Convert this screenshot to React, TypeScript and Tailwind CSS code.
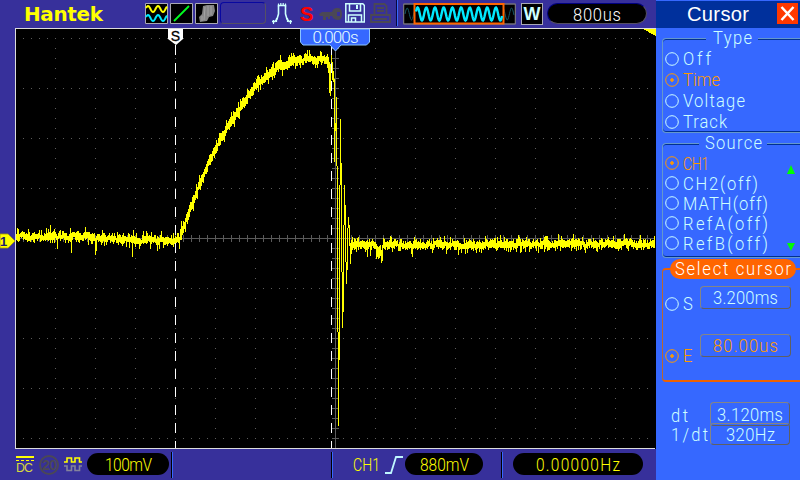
import React, { useLayoutEffect, useRef } from "react";

/* Condensed text whose tracking is tuned so that it fills a given width. */
function Fit({ text, w, squeeze = 0.92, className = "" }: { text: string; w: number; squeeze?: number; className?: string }) {
  const ref = useRef<HTMLSpanElement>(null);
  useLayoutEffect(() => {
    const el = ref.current;
    if (!el) return;
    el.style.letterSpacing = "0px";
    el.style.transform = "none";
    const natural = el.getBoundingClientRect().width;
    el.style.letterSpacing = `${(w / squeeze - natural) / Math.max(1, text.length - 1)}px`;
    el.style.transform = `scaleX(${squeeze})`;
  }, [text, w, squeeze]);
  return (
    <span className="block shrink-0" style={{ width: w }}>
      <span ref={ref} className={`block w-max origin-left whitespace-pre font-['Roboto',sans-serif] font-light text-[18px] leading-[20px] ${className}`}>
        {text}
      </span>
    </span>
  );
}

function noise(i: number) {
  const v = Math.sin(i * 127.1 + 11.7) * 43758.5453;
  return v - Math.floor(v);
}

const RISE: [number, number][] = [
  [176, 241], [180, 236], [183, 228], [186, 219], [190, 208], [195, 196], [200, 183], [205, 170], [210, 160],
  [220, 138], [230, 123], [240, 107], [250, 93], [260, 81], [270, 72], [280, 66], [290, 63], [300, 60], [327, 60], [330, 68],
];

const RING: [number, number, number][] = [
  [327, 54, 68], [328, 57, 73], [329, 62, 93], [330, 64, 96], [331, 54, 70], [332, 62, 80], [333, 71, 82],
  [334, 79, 162], [335, 123, 131], [336, 97, 166], [337, 166, 332], [338, 332, 426], [339, 185, 360],
  [340, 119, 185], [341, 163, 272], [342, 272, 328], [343, 225, 312], [344, 185, 225], [345, 205, 262],
  [346, 262, 284], [347, 228, 270], [348, 217, 228], [349, 225, 246], [350, 243, 264], [351, 240, 254], [352, 237, 250],
];

const SPIKES: Record<number, [number, number]> = {
  17: [228, 241], 50: [225, 243], 57: [236, 249], 71: [233, 253], 85: [227, 240], 95: [238, 255], 96: [236, 251],
  102: [230, 243], 132: [236, 257], 157: [236, 251], 173: [233, 247], 179: [237, 249], 181: [221, 240],
  367: [240, 257], 370: [242, 256], 376: [244, 259], 377: [246, 257], 378: [247, 259], 379: [246, 258],
  380: [245, 256], 381: [250, 263], 382: [245, 261], 412: [244, 257],
};

function tracePath() {
  let d = "";
  const bar = (x: number, a: number, b: number) => {
    d += `M${x} ${Math.round(a)}h1V${Math.round(b)}h-1z`;
  };
  for (let x = 16; x < 655; x++) {
    if (x >= 327 && x <= 352) continue;
    if (SPIKES[x]) {
      bar(x, SPIKES[x][0], SPIKES[x][1]);
      continue;
    }
    let c: number;
    if (x < 176) c = x < 85 ? 236.5 : 236.5 + Math.min(1, (x - 85) / 40) * 3.5;
    else if (x < 327) {
      const k = RISE.findIndex((p) => p[0] > x);
      const [x0, y0] = RISE[k - 1];
      const [x1, y1] = RISE[k];
      c = y0 + ((x - x0) / (x1 - x0)) * (y1 - y0);
    } else c = x < 500 ? 245 : 244.2;
    c += (noise((x >> 1) + 5000) - 0.5) * 3.2;
    const n1 = noise(x);
    const n2 = noise(x + 700);
    const big1 = noise(x + 1900) > 0.85 ? 4 : 0;
    const big2 = noise(x + 2900) > 0.86 ? 4 : 0;
    const rise = x > 176 && x < 300 ? 1 : 0;
    bar(x, c - 1.8 - rise - n1 * 3.4 - big1, c + 1.8 + rise + n2 * 3.2 + big2);
  }
  RING.forEach(([x, a, b]) => bar(x, a, b));
  return d;
}

function gridPath() {
  let d = "";
  for (let y = 38; y <= 438; y += 50) {
    if (y === 238) continue;
    for (let x = 23; x < 655; x += 8) d += `M${x} ${y}h1v1h-1z`;
  }
  for (let x = 55; x < 655; x += 40) {
    if (x === 335) continue;
    for (let y = 38; y < 448; y += 10) d += `M${x} ${y}h1v1h-1z`;
  }
  return d;
}

function axisPath() {
  let d = "M16 238h639v1H16zM335 29h1v419h-1z";
  for (let x = 23; x < 655; x += 8) d += `M${x} 235h1v7h-1z`;
  for (let y = 38; y < 448; y += 10) d += `M332 ${y}h7v1h-7z`;
  return d;
}

function wave(x0: number, x1: number, mid: number, amp: number, period: number, phase = 0) {
  let d = "";
  for (let x = x0; x <= x1; x += 0.5) {
    d += `${d ? "L" : "M"}${x} ${(mid - amp * Math.sin(((x - x0) / period) * Math.PI * 2 + phase)).toFixed(2)}`;
  }
  return d;
}

function Scope() {
  return (
    <svg width="656" height="421" viewBox="0 28 656 421" className="block shrink-0">
      <rect x="15" y="28" width="641" height="421" fill="#000" />
      <g shapeRendering="crispEdges">
        <path d={gridPath()} fill="#5c5c5c" />
        <path d={axisPath()} fill="#5a5a5a" />
        <path d={tracePath()} fill="#ffff00" />
        <path d="M175.5 45V448M331.5 45V448" stroke="#fff" strokeDasharray="10 8" />
        <path d="M15 28.5H656M15.5 28V449M15 448.5H655" stroke="#dcdcdc" />
        <path d="M643 29h13v7z" fill="#ffff00" />
      </g>
      <path d="M168 29h15v10l-7 6-8-6z" fill="#fff" />
      <text x="175.5" y="41" textAnchor="middle" fontSize="14" fontFamily="Liberation Sans, sans-serif" fill="#000" stroke="#000" strokeWidth=".3">S</text>
      <path d="M300.5 29h69v13l-3 3H341l-5.500 6-5.500-6H303l-2.500-3z" fill="#3668ff" stroke="#8cc4ff" />
      <text x="312.500" y="43" textLength="46" fontSize="17" fontWeight="300" fontFamily="Roboto, sans-serif" fill="#e8ffff">0.000s</text>
      <path d="M0 234h8l7 7-7 7H0z" fill="#ffff00" stroke="#a8a000" strokeWidth=".8" />
      <text x="0" y="246" fontSize="13" fontWeight="700" fontFamily="Liberation Sans, sans-serif" fill="#201c70">1</text>
    </svg>
  );
}

function TopBar() {
  return (
    <header className="flex h-7 shrink-0 items-start bg-[#37309b]">
      <span className="ml-[24px] mt-[3px] w-[121px]">
        <Fit text="Hantek" w={79} squeeze={1.05} className="font-['DejaVu_Sans',sans-serif]! font-bold! text-[19px]! leading-[22px]! text-[#ffff00]" />
      </span>
      <svg width="73" height="22" className="mt-[3px] shrink-0">
        <g fill="#000" stroke="#a9a9b5">
          <path d="M.5.5h22v20H.5zM25.500.5h22v20h-22zM50.500.5h22v20h-22z" />
        </g>
        <path d={wave(1, 22, 6, 3, 10, 0.3)} fill="none" stroke="#ffff00" strokeWidth="2" />
        <path d={wave(1, 22, 15, 3, 10, 0.3)} fill="none" stroke="#00e8ff" strokeWidth="2" />
        <path d="M29 18L44 3" stroke="#00ff20" strokeWidth="1.8" />
        <path d="M58 3l4-1h7l1 6-2 5-4 1-2 4-7 1-1-5 3-3z" fill="#858585" />
        <path d="M60 4l-1 13M63 3v10M66 3v9M57 13v5" stroke="#a9a9a9" strokeWidth=".8" />
      </svg>
      <div className="ml-[2px] mt-[2px] h-[22px] w-[46px] shrink-0 rounded-[4px] border border-[#0808a0] border-b-[#555064] border-r-[#555064]" />
      <svg width="24" height="22" className="ml-[5px] mt-[2px] shrink-0" fill="none" stroke="#ceffff" strokeWidth="1.200">
        <path d="M1 19.500H4L6 17 7.500 12V3.500H14.500V12L16 17 18 19.500H21" strokeWidth="1.600" />
        <path d="M2.500 22v-4M5.500 20v-4M16.500 20v-4M19.500 22v-4M7.500 5V1.500M9.800 4V1M12.200 4V1M14.500 5V1.500" />
      </svg>
      <span className="ml-[5px] mt-[3px] w-[19px] font-['Liberation_Sans',sans-serif] text-[20px] font-bold leading-[22px] text-[#ff0000]">S</span>
      <svg width="25" height="22" className="mt-[3px] shrink-0" fill="#4b4855">
        <path fillRule="evenodd" d="M0 11l3-2h10c1-4 4-4 6-4 3 0 4 3 4 6s-1 6-4 6c-2 0-5-1-6-4h-2v3H9v-2H7v3H4v-4H1zM18 9v4h3V9z" />
      </svg>
      <svg width="20" height="21" className="ml-px mt-[3px] shrink-0" fill="none" stroke="#ceffff" strokeWidth="1.500">
        <path d="M.8.8h17l1.600 1.600v16.600H.8z M4.500 1v7h11V1M3.500 19v-7h13v7M6.500 19v-4h4v4" />
        <path d="M12 2v4" strokeWidth="2" />
      </svg>
      <svg width="22" height="22" className="ml-[5px] mt-[3px] shrink-0" fill="none" stroke="#4b4855" strokeWidth="1.800">
        <path d="M4.500 11V1h10l2 2v8M7 5h7M7 8h7M1 12h19v7H1zM4 16h13" />
      </svg>
      <div className="ml-[4px] h-[26px] w-[2px] shrink-0 border-l border-[#080840] bg-[#3668ff]" />
      <svg width="113" height="22" className="ml-[5px] mt-[3px] shrink-0">
        <rect x=".5" y="1" width="112" height="20" rx="1" fill="#000" stroke="#73707c" strokeWidth="1.500" />
        <path d={wave(2, 111, 11, 6, 8.7)} fill="none" stroke="#155866" />
        <rect x="11.500" y="1" width="89" height="19.500" fill="#000" stroke="#ff6500" strokeWidth="2" />
        <path d={wave(13, 99, 11, 6.500, 8.7, 0.4)} fill="none" stroke="#00eaff" strokeWidth="2.400" />
      </svg>
      <div className="ml-[5px] mt-[3px] flex h-[22px] w-[22px] shrink-0 items-center justify-center border border-[#a9a9b5] bg-black font-['Liberation_Sans',sans-serif] text-[18px] font-bold leading-none text-[#ceffff]">W</div>
      <div className="ml-[4px] mt-[3px] flex h-[21px] w-[100px] shrink-0 items-center justify-center rounded-full border border-[#000080] border-b-[#555064] border-r-[#555064] bg-black pt-[2px] text-white">
        <Fit text="800us" w={48} />
      </div>
    </header>
  );
}

function Sep() {
  return <div className="h-[26px] w-[2px] shrink-0 border-l border-black bg-[#3668ff]" />;
}

function Pill({ text, w, className }: { text: string; w: number; className: string }) {
  return (
    <div className={`mt-px flex h-[22px] shrink-0 items-center justify-center rounded-full bg-black pt-[2px] ${className}`}>
      <Fit text={text} w={w} squeeze={0.86} />
    </div>
  );
}

function BottomBar() {
  return (
    <footer className="flex h-[31px] shrink-0 items-start bg-[#37309b] pt-[3px] text-[#ffff00]">
      <div className="ml-[16px] mt-[4px] w-[18px] shrink-0 border-t-2 border-[#ffff00]">
        <div className="mt-[2px] border-t border-dashed border-[#ffff00]" />
        <Fit text="DC" w={17} squeeze={0.95} className="font-['Liberation_Sans',sans-serif]! font-normal! text-[13px]! leading-[13px]! text-[#d8d840]" />
      </div>
      <div className="ml-[5px] mt-[3px] flex h-5 w-5 shrink-0 items-center justify-center rounded-full border-2 border-[#4b4855] font-['Liberation_Sans',sans-serif] text-[14px] font-bold leading-none tracking-tighter text-[#4b4855]">20</div>
      <svg width="19" height="18" className="ml-[5px] mt-[4px] shrink-0" fill="none" strokeWidth="1.600">
        <path d="M0 6h3V2h4.500v4H11V2h4.500v4H18" stroke="#ffff00" />
        <path d="M0 10h3v4.500h4.500V10H11v4.500h4.500V10H18" stroke="#84829c" />
      </svg>
      <Pill text="100mV" w={47} className="ml-[4px] w-[82px]" />
      <div className="ml-[2px]"><Sep /></div>
      <div className="ml-[158px]"><Sep /></div>
      <span className="ml-[20px] mt-[3px]"><Fit text="CH1" w={27} squeeze={0.78} /></span>
      <svg width="19" height="20" className="ml-[5px] mt-[3px] shrink-0" fill="none" stroke="#bff6ff" strokeWidth="1.800">
        <path d="M0 18h6L11 2h7" />
      </svg>
      <Pill text="880mV" w={49} className="ml-px w-[78px]" />
      <div className="ml-[18px]"><Sep /></div>
      <Pill text="0.00000Hz" w={84} className="ml-[10px] w-[130px]" />
    </footer>
  );
}

function Option({ label, w, on = false, className }: { label: string; w: number; on?: boolean; className: string }) {
  return (
    <div className={`flex items-center ${on ? "text-[#ff9a00]" : "text-[#ceffff]"} ${className}`}>
      <svg width="14" height="14" className="ml-[2px] mr-[4px] shrink-0" fill="none" stroke="currentColor">
        <circle cx="7" cy="7" r="6.300" />
        {on && <path d="M5 7h4M7 5v4" strokeWidth="1.600" />}
      </svg>
      <span className="pt-px"><Fit text={label} w={w} squeeze={label === "CH1" ? 0.78 : 0.92} /></span>
    </div>
  );
}

const GROUP = "ml-[6px] shrink-0 rounded-l-[4px] border border-r-0 border-[#6598cc] shadow-[inset_0_1px_0_#003090,inset_0_-1px_0_#003090]";
const VALUE = "flex w-[91px] items-center justify-center rounded-[4px] border border-[#858585] border-b-[#606060] border-r-[#606060]";

function Panel() {
  return (
    <aside className="flex h-[480px] w-36 shrink-0 flex-col overflow-hidden bg-[#3668ff] text-[#ceffff]">
      <div className="flex h-7 shrink-0 items-start border-t border-[#3668ff] bg-[#00309c]">
        <span className="ml-[31px] mt-px w-[90px]">
          <Fit text="Cursor" w={62} squeeze={0.96} className="font-['Liberation_Sans',sans-serif]! font-normal! text-[21px]! leading-[24px]! text-white" />
        </span>
        <svg width="21" height="21" className="mt-[2px] shrink-0">
          <rect width="21" height="21" fill="#ff3800" />
          <path d="M4.500 4l12 13M16.500 4l-12 13" stroke="#fff" strokeWidth="2.500" />
        </svg>
      </div>
      <section className={`${GROUP} mt-[10px] h-[95px]`}>
        <div className="-mt-[11px] ml-[43px] flex h-[20px] w-[52px] justify-center bg-[#3668ff]"><Fit text="Type" w={39} /></div>
        <Option label="Off" w={28} className="h-[21px]" />
        <Option label="Time" w={37} on className="h-[21px]" />
        <Option label="Voltage" w={62} className="h-[21px]" />
        <Option label="Track" w={44} className="h-[21px]" />
      </section>
      <section className={`${GROUP} mt-[10px] h-[115px]`}>
        <div className="-mt-[11px] ml-[36px] flex h-[20px] w-[68px] justify-center bg-[#3668ff]"><Fit text="Source" w={57} /></div>
        <div className="flex">
          <div className="w-[124px]">
            <Option label="CH1" w={26} on className="h-5" />
            <Option label="CH2(off)" w={75} className="h-5" />
            <Option label="MATH(off)" w={85} className="h-5" />
            <Option label="RefA(off)" w={85} className="h-5" />
            <Option label="RefB(off)" w={85} className="h-5" />
          </div>
          <div className="flex h-[88px] w-2 shrink-0 flex-col justify-between pt-[12px]">
            <svg width="8" height="9"><path d="M4 0l4 9H0z" fill="#00ff00" /></svg>
            <svg width="8" height="8" className="translate-y-[10px]"><path d="M0 0h8L4 8z" fill="#00ff00" /></svg>
          </div>
        </div>
      </section>
      <section className="ml-[6px] mt-[10px] h-[114px] shrink-0 rounded-l-[4px] border-y-2 border-l border-[#ee6200] border-l-[#b86830]">
        <div className="-mt-[11px] ml-[7px] flex h-[20px] w-[126px] items-center justify-center rounded-full bg-[#ff6500]"><Fit text="Select cursor" w={116} className="text-white" /></div>
        <div className="mt-[7px] flex h-[38px] items-start">
          <Option label="S" w={9} className="mt-[7px] w-[37px]" />
          <div className={`${VALUE} h-[23px]`}><Fit text="3.200ms" w={65} /></div>
        </div>
        <div className="mt-[10px] flex items-start">
          <Option label="E" w={9} on className="mt-[11px] w-[37px]" />
          <div className={`${VALUE} h-[23px] text-[#ff9a00]`}><Fit text="80.00us" w={65} /></div>
        </div>
      </section>
      <div className="ml-[15px] mt-[20px] flex">
        <div className="flex w-[39px] flex-col pt-[4px]">
          <Fit text="dt" w={17} />
          <span className="-mt-px h-5"><Fit text="1/dt" w={37} /></span>
        </div>
        <div>
          <div className={`${VALUE} h-[24px] w-[80px]! pt-[2px]`}><Fit text="3.120ms" w={66} /></div>
          <div className={`${VALUE} -mt-[3px] h-[22px] w-[80px]! pt-px`}><Fit text="320Hz" w={49} /></div>
        </div>
      </div>
    </aside>
  );
}

export default function App() {
  return (
    <main className="flex h-[480px] w-[800px] overflow-hidden bg-[#37309b]">
      <div className="flex w-[656px] shrink-0 flex-col">
        <TopBar />
        <Scope />
        <BottomBar />
      </div>
      <Panel />
    </main>
  );
}
